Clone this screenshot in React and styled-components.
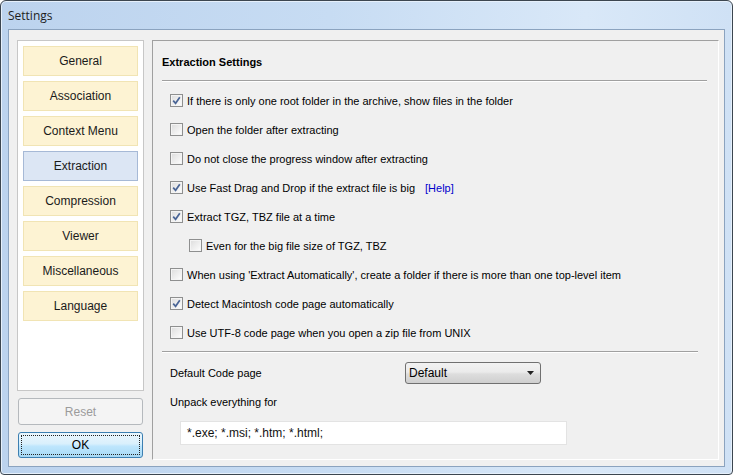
import React from "react";
import styled, { createGlobalStyle } from "styled-components";

const GlobalStyle = createGlobalStyle`
  html, body {
    margin: 0;
    padding: 0;
    background: #ffffff;
  }
  * {
    box-sizing: border-box;
  }
`;

const navItems = [
  "General",
  "Association",
  "Context Menu",
  "Extraction",
  "Compression",
  "Viewer",
  "Miscellaneous",
  "Language",
];

const options = [
  { label: "If there is only one root folder in the archive, show files in the folder", checked: true },
  { label: "Open the folder after extracting", checked: false },
  { label: "Do not close the progress window after extracting", checked: false },
  { label: "Use Fast Drag and Drop if the extract file is big", checked: true, help: true },
  { label: "Extract TGZ, TBZ file at a time", checked: true },
  { label: "Even for the big file size of TGZ, TBZ", checked: false, indent: true },
  { label: "When using 'Extract Automatically', create a folder if there is more than one top-level item", checked: false },
  { label: "Detect Macintosh code page automatically", checked: true },
  { label: "Use UTF-8 code page when you open a zip file from UNIX", checked: false },
];

const CheckBox = ({ checked }) => (
  <Box>
    {checked && (
      <svg width="9" height="9" viewBox="0 0 9 9">
        <path d="M1.2 4.6 L3.6 7.3 L7.8 1.2" fill="none" stroke="#4a6596" strokeWidth="1.7" />
      </svg>
    )}
  </Box>
);

const App = () => {
  return (
    <>
      <GlobalStyle />
      <Window>
        <TitleBar>Settings</TitleBar>
        <Client>
          <Sidebar>
            <NavPanel>
              {navItems.map((item) => (
                <NavButton key={item} $active={item === "Extraction"}>
                  {item}
                </NavButton>
              ))}
            </NavPanel>
            <ResetButton disabled>Reset</ResetButton>
            <OkButton>
              <FocusRect>OK</FocusRect>
            </OkButton>
          </Sidebar>
          <Main>
            <Heading>Extraction Settings</Heading>
            <Divider />
            <OptionList>
              {options.map((opt) => (
                <OptionRow key={opt.label} $indent={opt.indent}>
                  <CheckBox checked={opt.checked} />
                  <span>{opt.label}</span>
                  {opt.help && <HelpLink>[Help]</HelpLink>}
                </OptionRow>
              ))}
            </OptionList>
            <Divider $short />
            <FieldRow>
              <FieldLabel>Default Code page</FieldLabel>
              <Select>
                <span>Default</span>
                <svg width="7" height="4" viewBox="0 0 7 4">
                  <path d="M0 0 H7 L3.5 4 Z" fill="#222" />
                </svg>
              </Select>
            </FieldRow>
            <FieldLabel $pad>Unpack everything for</FieldLabel>
            <TextInput>*.exe; *.msi; *.htm; *.html;</TextInput>
          </Main>
        </Client>
      </Window>
    </>
  );
};

const Window = styled.div`
  width: 733px;
  height: 475px;
  display: flex;
  flex-direction: column;
  border: 1px solid #3c4650;
  border-radius: 6px 6px 4px 4px;
  background: linear-gradient(90deg, #bcd3ee 0%, #c7dcf3 45%, #d9e8f8 80%, #cfe1f5 100%);
  box-shadow: inset 0 0 0 1px #e6f0fb;
  font-family: "Liberation Sans", Arial, sans-serif;
  font-size: 11px;
  color: #000;
  overflow: hidden;
`;

const TitleBar = styled.div`
  height: 28px;
  padding: 6px 0 0 7px;
  font-family: "Open Sans", "Liberation Sans", sans-serif;
  font-size: 12px;
  color: #1e1e1e;
`;

const Client = styled.div`
  flex: 1;
  margin: 0 7px 7px 7px;
  border: 1px solid #8ba3bf;
  background: #f0f0f0;
  display: flex;
  padding: 10px 5px 6px 8px;
  gap: 8px;
`;

const Sidebar = styled.div`
  width: 127px;
  display: flex;
  flex-direction: column;
`;

const NavPanel = styled.div`
  height: 351px;
  background: #ffffff;
  border: 1px solid #c7c7c7;
  padding: 5px;
  display: flex;
  flex-direction: column;
  gap: 5px;
`;

const NavButton = styled.div`
  height: 30px;
  display: flex;
  align-items: center;
  justify-content: center;
  font-size: 12px;
  color: #1a1a1a;
  background: ${(p) => (p.$active ? "#dce6f4" : "#fdf3d3")};
  border: 1px solid ${(p) => (p.$active ? "#a6b9d6" : "#f1e4b4")};
`;

const ResetButton = styled.button`
  margin-top: 7px;
  margin-left: 1px;
  width: 125px;
  height: 27px;
  border: 1px solid #b5b9bd;
  border-radius: 3px;
  background: #f4f4f4;
  color: #9b9b9b;
  font-family: inherit;
  font-size: 12px;
`;

const OkButton = styled.button`
  margin-top: 7px;
  margin-left: 1px;
  width: 125px;
  height: 26px;
  padding: 2px;
  border: 1px solid #3c7fb1;
  border-radius: 3px;
  background: linear-gradient(180deg, #eaf6fd 0%, #d9f0fc 45%, #bee6fd 55%, #a7d9f5 100%);
  font-family: inherit;
  font-size: 12px;
  color: #000;
`;

const FocusRect = styled.div`
  height: 100%;
  display: flex;
  align-items: center;
  justify-content: center;
  border: 1px dotted #222;
`;

const Main = styled.div`
  flex: 1;
  border-top: 1px solid #a0a0a0;
  border-left: 1px solid #a0a0a0;
  border-right: 1px solid #ffffff;
  border-bottom: 1px solid #ffffff;
  padding: 13px 0 0 9px;
  display: flex;
  flex-direction: column;
`;

const Heading = styled.div`
  font-weight: bold;
  font-size: 11px;
  height: 16px;
  line-height: 16px;
`;

const Divider = styled.div`
  margin-top: ${(p) => (p.$short ? "4px" : "10px")};
  margin-right: ${(p) => (p.$short ? "20px" : "11px")};
  height: 2px;
  border-top: 1px solid #a0a0a0;
  border-bottom: 1px solid #ffffff;
`;

const OptionList = styled.div`
  display: flex;
  flex-direction: column;
  padding-top: 4px;
`;

const OptionRow = styled.div`
  height: 29px;
  display: flex;
  align-items: center;
  gap: 4px;
  padding-left: ${(p) => (p.$indent ? "27px" : "8px")};
`;

const Box = styled.div`
  width: 13px;
  height: 13px;
  border: 1px solid #8e8f8f;
  background: linear-gradient(135deg, #dcdcdc 0%, #f4f4f4 70%, #ffffff 100%);
  box-shadow: inset 0 0 0 1px #f4f4f4;
  display: flex;
  align-items: center;
  justify-content: center;
  flex-shrink: 0;
`;

const HelpLink = styled.span`
  color: #0000cc;
  margin-left: 6px;
`;

const FieldRow = styled.div`
  display: flex;
  align-items: center;
  margin-top: 9px;
  height: 22px;
`;

const FieldLabel = styled.div`
  width: 243px;
  padding-left: 8px;
  margin-top: ${(p) => (p.$pad ? "12px" : "0")};
`;

const Select = styled.div`
  width: 136px;
  height: 22px;
  display: flex;
  align-items: center;
  justify-content: space-between;
  padding: 0 6px 0 3px;
  border: 1px solid #707070;
  border-radius: 3px;
  background: linear-gradient(180deg, #f2f2f2 0%, #ebebeb 45%, #dddddd 55%, #cfcfcf 100%);
  font-size: 12px;
`;

const TextInput = styled.div`
  margin: 13px 0 0 18px;
  width: 387px;
  height: 24px;
  display: flex;
  align-items: center;
  padding-left: 6px;
  background: #ffffff;
  border: 1px solid #e3e3e3;
  font-size: 12px;
  color: #111;
`;

export default App;
